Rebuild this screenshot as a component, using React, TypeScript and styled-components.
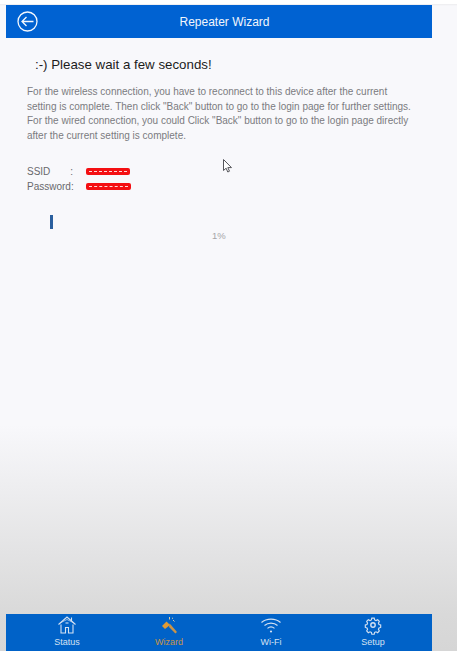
import { createGlobalStyle } from "styled-components"
import styled from "styled-components"

const Global = createGlobalStyle`
  html, body {
    margin: 0;
    padding: 0;
    height: 651px;
    overflow: hidden;
  }
  body {
    font-family: "Liberation Sans", Arial, sans-serif;
    background: linear-gradient(to bottom, #fff 0, #fff 4px, #ececee 4px, #f8f8fb 6px, #f8f8fb 425px, #d9d9d9 614px, #d6d6d6 651px);
  }
`

const Page = styled.div`
  position: relative;
  width: 457px;
  height: 651px;
  display: flex;
  flex-direction: column;
  box-sizing: border-box;
  padding: 5px 25px 0 6px;
`

const Header = styled.header`
  height: 33px;
  flex: none;
  background: #0062d2;
  display: flex;
  align-items: center;
  justify-content: center;
  position: relative;
  box-sizing: border-box;
  padding-left: 11px;
  color: #f2f6fc;
  font-size: 12px;
`

const BackButton = styled.button`
  position: absolute;
  left: 11px;
  top: 6px;
  width: 21px;
  height: 21px;
  padding: 0;
  border: 0;
  background: none;
  display: flex;
`

const Main = styled.main`
  flex: 1;
  display: flex;
  flex-direction: column;
  padding: 0 0 0 21px;
`

const Title = styled.h1`
  margin: 18px 0 0 8px;
  font-size: 13.3px;
  line-height: 18px;
  font-weight: 400;
  color: #1c1c1c;
`

const Intro = styled.p`
  margin: 11px 0 0;
  width: 392px;
  font-size: 10px;
  line-height: 14.7px;
  color: #7b7b80;
`

const Creds = styled.div`
  margin-top: 20px;
  display: flex;
  flex-direction: column;
`

const CredRow = styled.div`
  display: flex;
  align-items: center;
  height: 15px;
  font-size: 10px;
  color: #68686c;
`

const CredLabel = styled.span`
  width: 59px;
  display: flex;
  justify-content: space-between;
`

const Colon = styled.span`
  margin-right: 13px;
`

const Redacted = styled.span<{ $w: number }>`
  display: block;
  width: ${p => p.$w}px;
  height: 7px;
  background: #f40f12;
  border-radius: 2px;
  position: relative;

  &::after {
    content: '';
    position: absolute;
    left: 3px;
    right: 3px;
    top: 3px;
    border-top: 1px dashed #ffd9d9;
  }
`

const Progress = styled.div`
  margin: 21px 0 0 23px;
  width: 3px;
  height: 14px;
  background: #2a5f9e;
`

const Percent = styled.div`
  margin: 1px 0 0 185px;
  font-size: 9.5px;
  line-height: 12px;
  color: #a5a5a8;
`

const Cursor = styled.svg`
  position: absolute;
  left: 223px;
  top: 159px;
`

const TabBar = styled.nav`
  height: 37px;
  flex: none;
  background: #0062c8;
  display: grid;
  grid-template-columns: repeat(4, 102px);
  padding-left: 10px;
`

const Tab = styled.div<{ $active?: boolean }>`
  display: flex;
  flex-direction: column;
  align-items: center;
  color: ${p => (p.$active ? "#c99448" : "#d4e1f2")};
  font-size: 9px;
  line-height: 11px;
  padding-top: 1px;
  box-sizing: border-box;
`

const TabIcon = styled.svg`
  display: block;
  width: 20px;
  height: 20px;
  margin-bottom: 2px;
  flex: none;
`

const tabStroke = { fill: "none", stroke: "currentColor", strokeWidth: 1.1 }

const App = () => {
  return (
    <Page>
      <Global />
      <Header>
        <BackButton aria-label="Back">
          <svg width="21" height="21" viewBox="0 0 21 21" fill="none" stroke="#f4f8fd" strokeWidth="1.3">
            <circle cx="10.5" cy="10.5" r="9.5" />
            <path d="M16.5 10.5H5M9.5 6 5 10.5 9.5 15" />
          </svg>
        </BackButton>
        Repeater Wizard
      </Header>
      <Main>
        <Title>:-) Please wait a few seconds!</Title>
        <Intro>
          For the wireless connection, you have to reconnect to this device after the current setting is complete. Then click "Back" button to go to the login page for further settings. For the wired connection, you could Click "Back" button to go to the login page directly after the current setting is complete.
        </Intro>
        <Creds>
          <CredRow>
            <CredLabel><span>SSID</span><Colon>:</Colon></CredLabel>
            <Redacted $w={44} />
          </CredRow>
          <CredRow>
            <CredLabel><span>Password:</span></CredLabel>
            <Redacted $w={45} />
          </CredRow>
        </Creds>
        <Progress />
        <Percent>1%</Percent>
      </Main>
      <TabBar>
        <Tab>
          <TabIcon viewBox="0 0 20 20" {...tabStroke}>
            <path d="M1.500 9.500 10 2l8.500 7.500M14.500 2.500v3.500" />
            <path d="M3 8 10 4.500 17 8" strokeWidth="0.7" />
            <path d="M4 9.500V18h4.500v-5.500h3V18H16V9.500" />
            <path d="M8.500 8h3" />
          </TabIcon>
          Status
        </Tab>
        <Tab $active>
          <TabIcon viewBox="0 0 20 20">
            <g transform="translate(0 1)">
              <path d="M10.500 7.500 12 9l6 7-1.600 1.500L10 11z" fill="#c99448" />
              <path d="M7.500 5.500 11 9l-5 4-3-3z" fill="#e09a35" />
              <path d="M10.500 1v2.500M14 4l1.500 1.500M13 2l1 .5" stroke="#dcc9a2" strokeWidth="1" fill="none" />
            </g>
          </TabIcon>
          Wizard
        </Tab>
        <Tab>
          <TabIcon viewBox="0 0 20 20" {...tabStroke}>
            <g transform="translate(0 1)">
              <path d="M.5 6.500C5.500 2 14.500 2 19.500 6.500M3.500 9.500c3.500-3.200 9.500-3.200 13 0M6.500 12.300c2-1.700 5-1.700 7 0" />
              <circle cx="10" cy="15.500" r="1.100" fill="currentColor" stroke="none" />
            </g>
          </TabIcon>
          Wi-Fi
        </Tab>
        <Tab>
          <TabIcon viewBox="0 0 20 20" {...tabStroke} strokeWidth={1.4}>
            <path d="M8.500 1.500h3l.5 2.300 1.700.8 2.100-1.100 2 2.100-1.100 2.100.7 1.700 2.100.6v3l-2.100.6-.7 1.700 1.100 2.100-2 2.100-2.100-1.100-1.700.7-.5 2.300h-3l-.5-2.300-1.700-.7-2.100 1.100-2-2.100 1.100-2.100-.7-1.700-2.100-.6v-3l2.100-.6.7-1.700-1.100-2.100 2-2.100 2.100 1.100 1.700-.8z" transform="translate(1.900 1.900) scale(.81)" />
            <circle cx="10" cy="10" r="2.200" />
          </TabIcon>
          Setup
        </Tab>
      </TabBar>
      <Cursor width="10" height="14" viewBox="0 0 10 14">
        <path d="M.5.5v11l2.600-2.300 1.700 3.800 1.700-.8-1.700-3.600H8.500z" fill="#fff" stroke="#55555a" strokeWidth="1" />
      </Cursor>
    </Page>
  )
}

export default App
